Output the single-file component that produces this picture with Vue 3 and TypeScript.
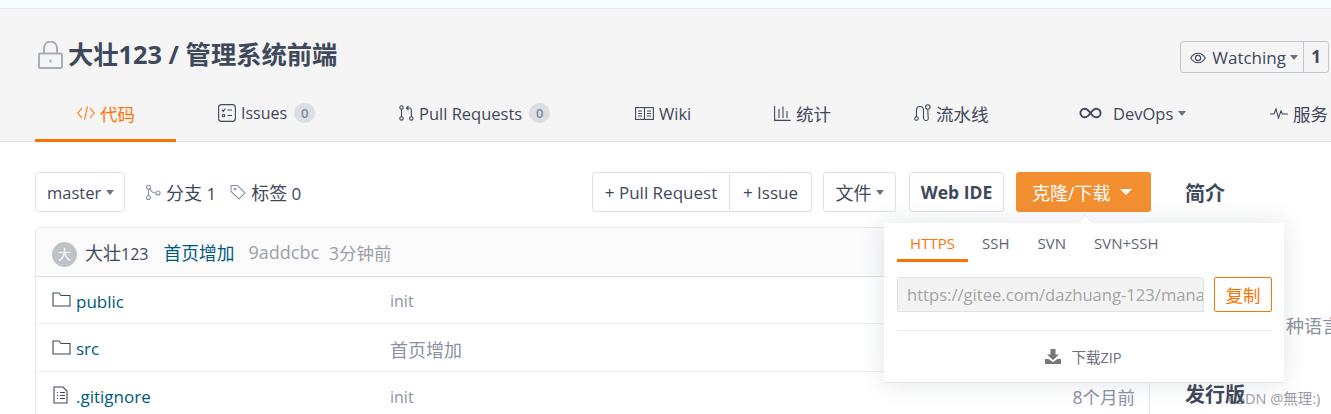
<script setup lang="ts">
const files = [
  { name: 'public', msg: 'init', time: '', icon: 'folder', zh: false },
  { name: 'src', msg: '首页增加', time: '', icon: 'folder', zh: true },
  { name: '.gitignore', msg: 'init', time: '8个月前', icon: 'file', zh: false },
]
</script>

<template>
  <div class="page">
    <div class="strip"></div>
    <header class="head">
      <div class="title-row">
        <h1 class="title">
          <svg class="lock" width="25" height="28" viewBox="0 0 25 28" fill="none" stroke="#a7adbb" stroke-width="2"><rect x="1" y="12.500" width="23" height="14.500" rx="1.500"/><path d="M6 12.500V7a6.500 6.500 0 0 1 13 0v5.500"/><path d="M12.500 18.500v3"/></svg>
          <span class="title-text">大壮123 / 管理系统前端</span>
        </h1>
        <div class="watch">
          <span class="watch-l">
            <svg width="16" height="12" viewBox="0 0 16 12" fill="none" stroke="#40485b" stroke-width="1.100"><path d="M.8 6C2.600 2.800 5 1.200 8 1.200s5.400 1.600 7.200 4.800C13.400 9.200 11 10.800 8 10.800S2.600 9.200.8 6z"/><circle cx="8" cy="6" r="2.600"/></svg>
            <span>Watching</span><i class="caret"></i>
          </span>
          <b class="watch-n">1</b>
        </div>
      </div>
      <nav class="tabs">
        <a class="tab active">
          <svg width="18" height="16" viewBox="0 0 18 16" fill="none" stroke="#fe7300" stroke-width="1.100"><path d="M5 3 .8 8 5 13M13 3l4.200 5L13 13M10.500 1.500l-3 13"/></svg>
          <span class="zh">代码</span>
        </a>
        <a class="tab">
          <svg width="18" height="18" viewBox="0 0 18 18" fill="none" stroke="#40485b" stroke-width="1.100"><rect x=".6" y=".6" width="16.800" height="16.800" rx="3"/><path d="m4 6 1.300 1.300L7.500 4.500M9.500 6H14M9.500 11.500H14"/><circle cx="5.500" cy="11.500" r="1.300"/></svg>
          <span class="issues">Issues</span><em class="count">0</em>
        </a>
        <a class="tab">
          <svg width="15" height="16" viewBox="0 0 15 16" fill="none" stroke="#40485b" stroke-width="1.100"><circle cx="2.500" cy="2.500" r="1.700"/><circle cx="2.500" cy="13.500" r="1.700"/><circle cx="12.300" cy="13.500" r="1.700"/><path d="M2.500 4.200v7.600M12.300 11.800V5a2 2 0 0 0-2-2H7.500M9.500 1l-2 2 2 2"/></svg>
          <span>Pull Requests</span><em class="count">0</em>
        </a>
        <a class="tab">
          <svg width="19" height="13" viewBox="0 0 19 13" fill="none" stroke="#40485b" stroke-width="1.100"><rect x=".6" y=".6" width="17.800" height="11.800"/><path d="M9.500.6v11.800M3 4h4M3 6.500h4M3 9h4M12 4h4M12 6.500h4M12 9h4"/></svg>
          <span>Wiki</span>
        </a>
        <a class="tab">
          <svg width="17" height="16" viewBox="0 0 17 16" fill="none" stroke="#40485b" stroke-width="1.100"><path d="M.6 1v14.400h16M5 4v9M9 1.500V13M13 6v7"/></svg>
          <span class="zh">统计</span>
        </a>
        <a class="tab">
          <svg width="17" height="18" viewBox="0 0 17 18" fill="none" stroke="#40485b" stroke-width="1.100"><circle cx="2.500" cy="14.500" r="1.800"/><circle cx="13.800" cy="3" r="2.200"/><path d="M2.500 12.700V6a3.500 3.500 0 0 1 7 0v8.500a2.500 2.500 0 0 0 4.500 1c.6-1 0-3 0-4.500 0-1.500 0-2.500-.2-5"/></svg>
          <span class="zh">流水线</span>
        </a>
        <a class="tab devops">
          <svg width="23" height="12" viewBox="0 0 24 12" fill="none" stroke="#40485b" stroke-width="2"><path d="M12 6C9.500 2.500 8 1.500 6 1.500a4.500 4.500 0 0 0 0 9c2 0 3.500-1 6-4.500 2.500-3.500 4-4.500 6-4.500a4.500 4.500 0 0 1 0 9c-2 0-3.500-1-6-4.500z"/></svg>
          <span class="dv">DevOps</span><i class="caret"></i>
        </a>
        <a class="tab">
          <svg width="18" height="12" viewBox="0 0 18 12" fill="none" stroke="#40485b" stroke-width="1.100"><path d="M0 7h4l2-5 2.500 9L11 4l1.500 3H18"/></svg>
          <span class="zh">服务</span>
        </a>
      </nav>
    </header>

    <main class="body">
      <section class="left">
        <div class="toolbar">
          <button class="btn master">master<i class="caret"></i></button>
          <span class="meta meta-first">
            <svg width="16" height="17" viewBox="0 0 16 16" fill="none" stroke="#8c92a4" stroke-width="1.100"><circle cx="3.500" cy="2.800" r="2"/><circle cx="3.500" cy="13" r="2"/><circle cx="13" cy="8.500" r="2"/><path d="M3.500 4.800V11M5.300 4c.5 3 2.500 4.500 5.700 4.500"/></svg>
            <span><span class="zs">分支</span> 1</span>
          </span>
          <span class="meta">
            <svg width="16" height="16" viewBox="0 0 16 16" fill="none" stroke="#8c92a4" stroke-width="1.100"><path d="M1 1.500h6.500l7.500 7.500-6 6-8-7.500z"/><circle cx="5" cy="5" r=".8"/></svg>
            <span><span class="zs">标签</span> 0</span>
          </span>
          <div class="spacer"></div>
          <div class="group">
            <button class="btn g1">+ Pull Request</button>
            <button class="btn g2">+ Issue</button>
          </div>
          <button class="btn file"><span class="zs">文件</span><i class="caret"></i></button>
          <button class="btn ide">Web IDE</button>
          <button class="btn clone"><span class="zs">克隆/下载</span><i class="caret white"></i></button>
        </div>

        <div class="table">
          <div class="commit">
            <span class="avatar">大</span>
            <span class="author"><span class="zs">大壮</span>123</span>
            <a class="commit-msg">首页增加</a>
            <span class="hash zs">9addcbc</span>
            <span class="hash when">3分钟前</span>
          </div>
          <div v-for="f in files" :key="f.name" class="row">
            <svg v-if="f.icon === 'folder'" class="ficon" width="19" height="15" viewBox="0 0 19 15" fill="none" stroke="#40485b" stroke-width="1.100"><path d="M1 14V1h6l2 2.500h9V14z"/></svg>
            <svg v-else class="ficon doc" width="15" height="18" viewBox="0 0 15 18" fill="none" stroke="#40485b" stroke-width="1.100"><path d="M1 1h9l4 4v12H1z"/><path d="M4 6.500h1M7 6.500h5M4 9.500h1M7 9.500h5M4 12.500h1M7 12.500h5"/></svg>
            <a class="fname">{{ f.name }}</a>
            <span class="fmsg" :class="{ zs: f.zh }">{{ f.msg }}</span>
            <span class="ftime when">{{ f.time }}</span>
          </div>
        </div>

        <div class="pop">
          <span class="pop-arrow"></span>
          <div class="pop-tabs">
            <a class="pt on">HTTPS</a>
            <a class="pt">SSH</a>
            <a class="pt">SVN</a>
            <a class="pt">SVN+SSH</a>
          </div>
          <div class="pop-url">
            <div class="url"><span>https://gitee.com/dazhuang-123/management-system.git</span></div>
            <button class="copy">复制</button>
          </div>
          <div class="zip">
            <svg width="16" height="15" viewBox="0 0 16 15" fill="#777"><path d="M5.500 0h5v5.500H14L8 11 2 5.500h3.500z"/><path d="M0 10h3.500L8 13l4.500-3H16v5H0z"/></svg>
            <span>下载ZIP</span>
          </div>
        </div>
      </section>

      <aside class="side">
        <h3 class="side-h">简介</h3>
        <p class="desc">种语言</p>
        <h3 class="side-h rel">发行版</h3>
      </aside>
    </main>
    <span class="mark">CSDN @無理:)</span>
  </div>
</template>

<style>
html, body { margin: 0; padding: 0; background: #fff; overflow: hidden; }
</style>

<style scoped>
.page {
  position: relative;
  isolation: isolate;
  width: 1331px;
  height: 414px;
  overflow: hidden;
  font-family: "Open Sans", "Noto Sans CJK SC", sans-serif;
  color: #40485b;
  font-size: 16px;
}
.zs { font-size: 18px; }
.zh { font-size: 17.500px; }
.when { font-size: 17.500px; }
.strip { height: 8px; background: #f7fffe; border-bottom: 1px solid #e6ecee; }
.head { height: 133px; box-sizing: border-box; background: #f5f5f5; border-bottom: 1px solid #dfe3e8; }
.title-row { display: flex; justify-content: space-between; align-items: flex-start; padding: 32px 2px 0 38px; height: 85px; box-sizing: border-box; }
.title { display: flex; align-items: center; gap: 5px; margin: 0; font-size: 25.300px; line-height: 28px; font-weight: 700; height: 28px; }
.title-text { margin-top: -2px; }
.watch { display: flex; height: 32px; box-sizing: border-box; border: 1px solid #c3c7d4; border-radius: 3px; line-height: 30px; font-size: 17px; }
.watch-l { display: flex; align-items: center; padding: 1px 5px 0 9px; gap: 6px; border-right: 1px solid #c3c7d4; }
.watch-l .caret { margin-left: -2px; }
.watch-n { width: 24px; text-align: center; }
.caret { display: inline-block; width: 0; height: 0; border-left: 4.500px solid transparent; border-right: 4.500px solid transparent; border-top: 5px solid #6a7080; margin-left: 5px; }
.tabs { display: flex; align-items: stretch; margin-left: 35px; height: 48px; white-space: nowrap; position: relative; }
.tab { display: flex; align-items: center; gap: 5px; padding: 0 0 10px 42px; height: 48px; box-sizing: border-box; flex: none; font-size: 16.500px; }
.tab:nth-child(1) { width: 141px; }
.tab:nth-child(2) { width: 181px; }
.tab:nth-child(3) { width: 236px; }
.tab:nth-child(4) { width: 139px; }
.tab:nth-child(5) { width: 140px; }
.tab:nth-child(6) { width: 160px; }
.tab:nth-child(7) { width: 196px; }
.tab.active { color: #fe7300; border-bottom: 3px solid #fe7300; padding-bottom: 7px; }
.issues { font-size: 16px; }
.devops { padding-left: 47px; }
.dv { margin-left: 6px; }
.devops .caret { margin-left: 0; }
.count { font-style: normal; width: 21px; height: 20px; line-height: 20px; border-radius: 10px; background: #dcdee2; color: #7a86a8; text-align: center; font-size: 13px; font-weight: 600; margin-left: 2px; }
.body { display: flex; padding: 0 0 0 35px; position: relative; }
.left { position: relative; width: 1116px; flex: none; padding-top: 30px; }
.toolbar { display: flex; align-items: center; height: 40px; }
.btn { height: 40px; box-sizing: border-box; background: #fff; border: 1px solid #dce3e8; border-radius: 3px; color: #40485b; font: inherit; font-size: 17px; padding: 0 12px; display: inline-flex; align-items: center; white-space: nowrap; flex: none; }
.master { font-size: 16.500px; width: 90px; padding: 0 11px; }
.meta { display: inline-flex; align-items: center; gap: 5px; font-size: 17px; }
.meta-first { margin-left: 20px; margin-right: 14px; }
.spacer { flex: 1; }
.group { display: flex; margin-right: 11px; }
.g1 { border-radius: 3px 0 0 3px; width: 138px; justify-content: center; }
.g2 { border-radius: 0 3px 3px 0; border-left: 0; width: 82px; justify-content: center; padding: 0; }
.file { margin-right: 13px; width: 73px; justify-content: center; padding: 0; }
.file .caret { margin-left: 4px; }
.ide { font-weight: 700; margin-right: 12px; width: 95px; justify-content: center; padding: 0; font-size: 17.500px; }
.clone { background: #f38f31; border: none; color: #fff; width: 135px; padding: 0 0 0 16px; }
.clone .caret { margin-left: 9px; }
.white { border-top-color: #fff; border-left-width: 6px; border-right-width: 6px; border-top-width: 6px; }
.table { margin: 15px 1px 0 0; border: 1px solid #e3e9ed; border-radius: 4px 4px 0 0; border-bottom: 0; }
.commit { display: flex; align-items: center; height: 49px; background: #fbfbfc; border-bottom: 1px solid #dce3e8; padding: 0 16px; box-sizing: border-box; }
.avatar { width: 25px; height: 25px; border-radius: 50%; background: #bfc3c8; color: #fff; font-size: 13px; line-height: 25px; text-align: center; margin: 5px 8px 0 0; }
.author { margin-right: 15px; }
.commit-msg { color: #005980; margin-right: 14px; font-size: 17.750px; }
.hash { color: #9b9fa9; margin-right: 10px; }
.row { display: flex; align-items: center; height: 48px; box-sizing: border-box; border-bottom: 1px solid #eef0f3; padding: 2px 14px 0 16px; }
.commit + .row { height: 47px; }
.ficon { flex: none; margin-top: -3px; }
.fname { color: #005980; margin-left: 5px; width: 314px; flex: none; font-size: 17px; }
.doc { margin-left: 1px; margin-right: 8px; margin-top: -4px; }
.row:last-child .fname { margin-left: 0; }
.fmsg { color: #8c92a4; flex: 1; }
.ftime { color: #8c92a4; }
.pop { position: absolute; left: 849px; top: 81px; width: 400px; height: 160px; background: #fff; box-shadow: 0 0 24px rgba(60,70,90,.14); border-bottom: 1px solid #dfe3e8; box-sizing: border-box; padding: 0 12px 0 13px; z-index: 2; }
.pop-arrow { position: absolute; top: -6px; left: 195px; width: 11px; height: 11px; background: #fff; transform: rotate(45deg); border: 1px solid #e8eaee; border-right: 0; border-bottom: 0; }
.pop-tabs { display: flex; height: 39px; font-size: 15px; position: relative; }
.pt { padding: 0 14px; line-height: 40px; color: #5e6472; }
.pt.on { color: #fe7300; border-bottom: 3px solid #fe7300; height: 36px; padding: 0; width: 71px; text-align: center; }
.pop-url { display: flex; justify-content: space-between; margin-top: 15px; height: 35px; }
.url { width: 307px; height: 35px; box-sizing: border-box; background: #f3f3f3; border: 1px solid #dfe1e4; border-radius: 2px; color: #a4a4a4; line-height: 33px; padding-left: 9px; font-size: 16.600px; overflow: hidden; white-space: nowrap; }
.copy { width: 58px; height: 35px; box-sizing: border-box; background: #fff; border: 1px solid #fe7300; border-radius: 2px; color: #fe7300; font: inherit; font-size: 17.500px; padding: 0; }
.zip { margin-top: 18px; border-top: 1px solid #e8eaee; height: 50px; display: flex; align-items: center; justify-content: center; gap: 10px; font-size: 14.500px; color: #6a7080; padding-right: 2px; }
.side { padding: 38px 0 0 35px; width: 145px; flex: none; box-sizing: border-box; }
.side-h { font-size: 20px; line-height: 28px; margin: 0 0 0 -1px; font-weight: 700; }
.desc { margin: 107px 0 0 100px; color: #8c92a4; white-space: nowrap; line-height: 22px; font-size: 18px; }
.rel { margin-top: 44px; }
.mark { position: absolute; left: 1228px; top: 387px; font-size: 14.500px; color: #9a9ca3; z-index: -1; }
</style>
